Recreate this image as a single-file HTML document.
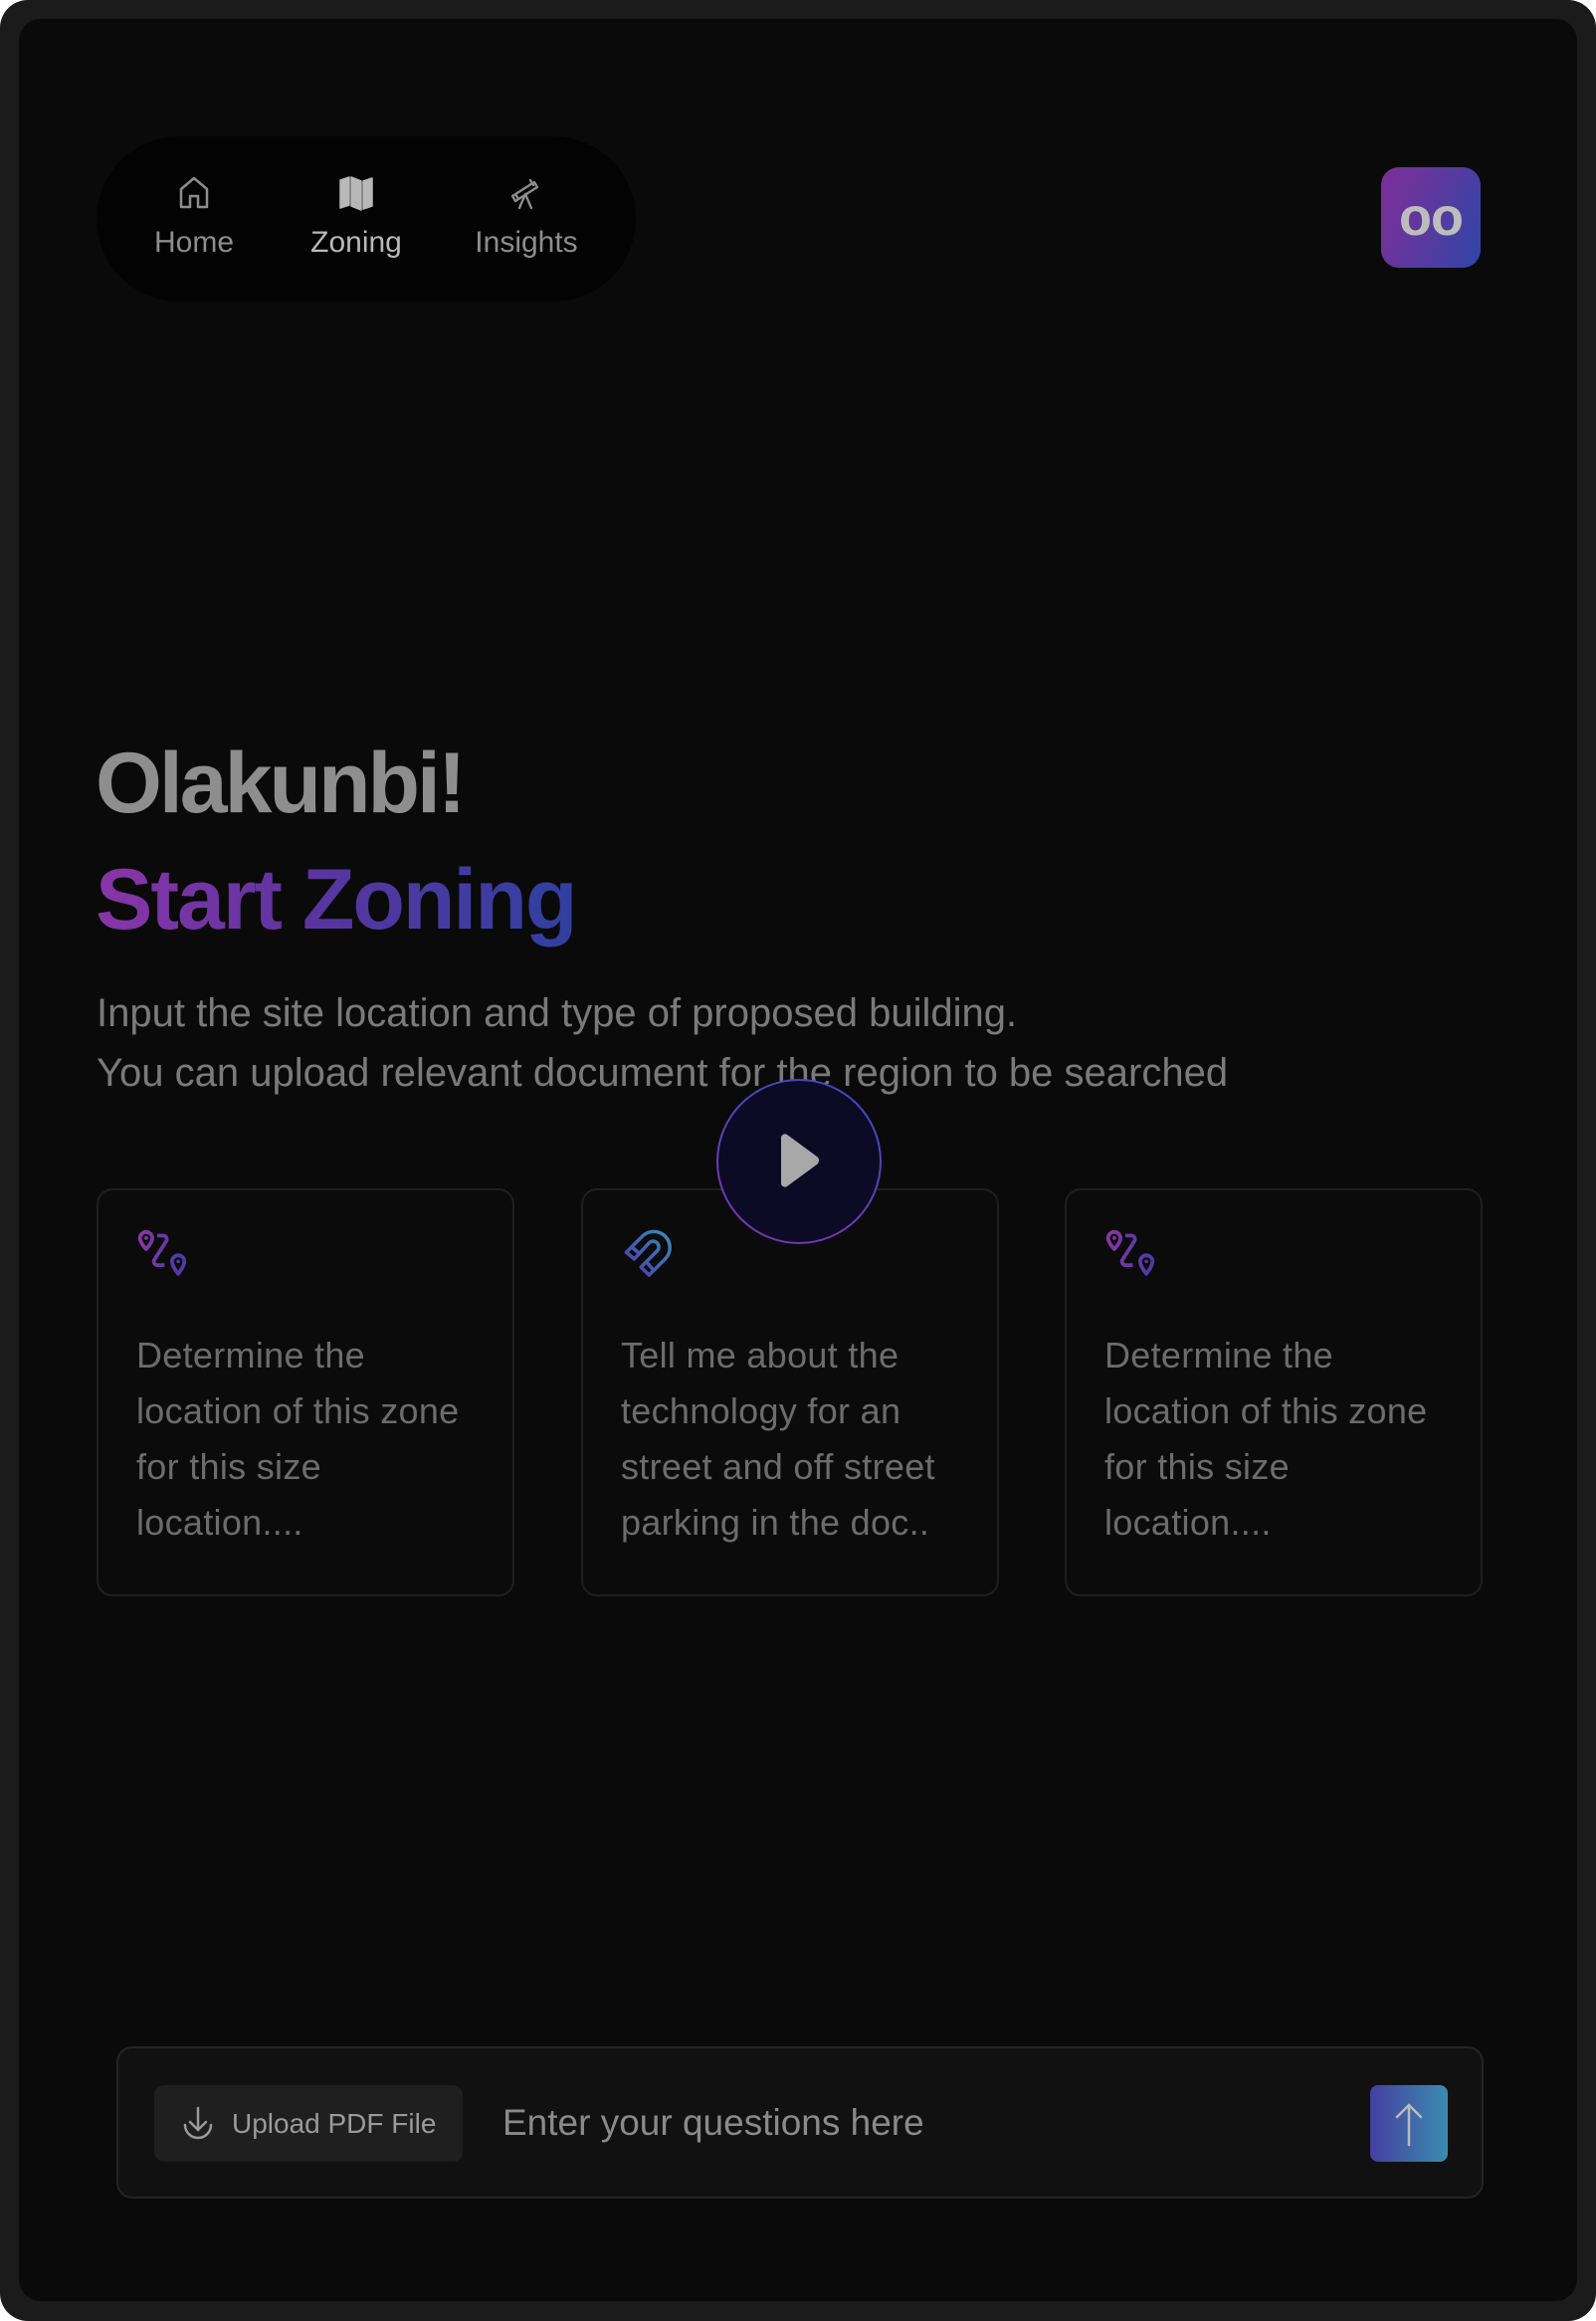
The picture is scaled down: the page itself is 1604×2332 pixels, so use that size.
<!DOCTYPE html>
<html><head><meta charset="utf-8"><style>
*{margin:0;padding:0;box-sizing:border-box}
html,body{width:1604px;height:2332px;background:#fff;overflow:hidden;font-family:"Liberation Sans",sans-serif}
.outer{position:absolute;left:0;top:0;width:1604px;height:2332px;background:#1b1b1b;border-radius:28px}
.inner{position:absolute;left:19px;top:19px;width:1566px;height:2293px;background:#0a0a0a;border-radius:22px}
.nav{position:absolute;left:97px;top:137px;width:542px;height:166px;background:#030303;border-radius:83px}
.ni{position:absolute;top:36px;width:150px;margin-left:-75px;text-align:center;color:#8d8d8d;font-size:30px}
.ni svg{display:block;margin:0 auto 14px;height:40px}
.logo{position:absolute;left:1388px;top:168px;width:100px;height:101px;border-radius:18px;background:linear-gradient(110deg,#7d2e9a,#5a3a9e 50%,#2f45a8);color:#bdbdbd;font-weight:bold;font-size:54px;text-align:center;line-height:101px;letter-spacing:-1px}
h1{position:absolute;left:96px;font-size:86px;font-weight:bold;letter-spacing:-3px;white-space:nowrap}
.p{position:absolute;left:97px;color:#7a7a7a;font-size:40px;white-space:nowrap}
.card{position:absolute;top:1194px;width:420px;height:410px;border:2px solid #1f1f1f;border-radius:16px;background:#0b0b0b}
.card svg{position:absolute;left:38px;top:38px}
.card .t{position:absolute;left:38px;top:138px;color:#6c6c6c;font-size:36px;line-height:56px;letter-spacing:0.3px;white-space:nowrap}
.play{position:absolute;left:720px;top:1084px;width:166px;height:166px;border-radius:50%;background:linear-gradient(#0c0a24,#0c0a24) padding-box,linear-gradient(200deg,#3a4bc0,#7a35b0) border-box;border:2px solid transparent}
.bar{position:absolute;left:117px;top:2056px;width:1374px;height:153px;background:#111;border:2px solid #242424;border-radius:16px}
.up{position:absolute;left:36px;top:37px;width:310px;height:77px;background:#1f1f1f;border-radius:10px;color:#9a9a9a;font-size:28px;line-height:77px;padding-left:78px}
.up svg{position:absolute;left:26px;top:20px}
.ph{position:absolute;left:386px;top:0;line-height:149px;color:#8a8a8a;font-size:37px}
.send{position:absolute;left:1258px;top:37px;width:78px;height:77px;border-radius:8px;background:linear-gradient(90deg,#463fa0,#3a8cb0)}
</style></head><body>
<div class="outer"></div><div class="inner"></div>
<div class="nav">
 <div class="ni" style="left:98px"><svg viewBox="0 0 40 40" width="40"><path d="M7 35V17L20 6l13 11v18h-9V24h-8v11z" fill="none" stroke="#8d8d8d" stroke-width="2.5" stroke-linejoin="round"/></svg>Home</div>
 <div class="ni" style="left:261px;color:#b8b8b8"><svg viewBox="0 0 40 40" width="40"><path d="M4 8l9-3v28l-9 3zM15 5l10 4v29l-10-4zM27 9l9-3v28l-9 3z" fill="#b8b8b8" stroke="#b8b8b8" stroke-width="1.5" stroke-linejoin="round"/></svg>Zoning</div>
 <div class="ni" style="left:432px"><svg viewBox="0 0 40 40" width="40"><path d="M6 24l22-14 3 5-22 14zM9 22l3 5M24 8l3 5M19 22l-6 14M19 22l6 14" fill="none" stroke="#8d8d8d" stroke-width="2.3" stroke-linejoin="round" stroke-linecap="round"/></svg>Insights</div>
</div>
<div class="logo">oo</div>
<h1 style="top:738px;color:#8e8e8e">Olakunbi!</h1>
<h1 style="top:855px;letter-spacing:-2px;background:linear-gradient(90deg,#8a35a8,#5a35a0 45%,#3040a0);-webkit-background-clip:text;background-clip:text;color:transparent">Start Zoning</h1>
<div class="p" style="top:996px">Input the site location and type of proposed building.</div>
<div class="p" style="top:1056px">You can upload relevant document for the region to be searched</div>
<div class="card" style="left:97px"><svg width="52" height="52" viewBox="0 0 42 42"><defs><linearGradient id="g1" x1="0" x2="1"><stop offset="0" stop-color="#8a35a8"/><stop offset="1" stop-color="#4a3aa8"/></linearGradient></defs><path d="M8 3a5 5 0 0 1 5 5c0 4-5 9-5 9s-5-5-5-9a5 5 0 0 1 5-5zM17 6h5a3 3 0 0 1 2 5l-9 14a3 3 0 0 0 2 5h6M34 22a5 5 0 0 1 5 5c0 4-5 10-5 10s-5-6-5-10a5 5 0 0 1 5-5z" fill="none" stroke="url(#g1)" stroke-width="3" stroke-linejoin="round"/><circle cx="8" cy="8" r="1.5" fill="#8a35a8"/><circle cx="34" cy="27" r="1.5" fill="#4a3aa8"/></svg><div class="t">Determine the<br>location of this zone<br>for this size<br>location....</div></div>
<div class="card" style="left:584px"><svg width="62" height="62" viewBox="0 0 46 46"><defs><linearGradient id="g2" x1="0" x2="1" y1="1" y2="0"><stop offset="0" stop-color="#4a3aa8"/><stop offset="1" stop-color="#3a8cb8"/></linearGradient></defs><path d="M4 18l12-12a12 12 0 0 1 17 17L21 35l-6-6 12-12a4 4 0 0 0-6-6L10 23zM4 18l6 5M15 29l6 6M8 14l6 5M19 25l5 6" fill="none" stroke="url(#g2)" stroke-width="2.6" stroke-linejoin="round"/></svg><div class="t">Tell me about the<br>technology for an<br>street and off street<br>parking in the doc..</div></div>
<div class="card" style="left:1070px"><svg width="52" height="52" viewBox="0 0 42 42"><path d="M8 3a5 5 0 0 1 5 5c0 4-5 9-5 9s-5-5-5-9a5 5 0 0 1 5-5zM17 6h5a3 3 0 0 1 2 5l-9 14a3 3 0 0 0 2 5h6M34 22a5 5 0 0 1 5 5c0 4-5 10-5 10s-5-6-5-10a5 5 0 0 1 5-5z" fill="none" stroke="url(#g1)" stroke-width="3" stroke-linejoin="round"/><circle cx="8" cy="8" r="1.5" fill="#8a35a8"/><circle cx="34" cy="27" r="1.5" fill="#4a3aa8"/></svg><div class="t">Determine the<br>location of this zone<br>for this size<br>location....</div></div>
<div class="play"><svg width="162" height="162" viewBox="0 0 162 162"><path d="M63 58a4 4 0 0 1 6-4l30 22a5 5 0 0 1 0 8L69 106a4 4 0 0 1-6-4z" fill="#a8a8a8"/></svg></div>
<div class="bar">
 <div class="up"><svg width="36" height="38" viewBox="0 0 36 38"><path d="M18 3v22M10 17l8 8 8-8M5 20a13 13 0 0 0 26 0" fill="none" stroke="#9a9a9a" stroke-width="2.5" stroke-linecap="round"/></svg>Upload PDF File</div>
 <div class="ph">Enter your questions here</div>
 <div class="send"><svg width="78" height="77" viewBox="0 0 78 77"><path d="M39 60V20M27 32l12-12 12 12" fill="none" stroke="#bbb" stroke-width="2.5" stroke-linecap="round"/></svg></div>
</div>
</body></html>
